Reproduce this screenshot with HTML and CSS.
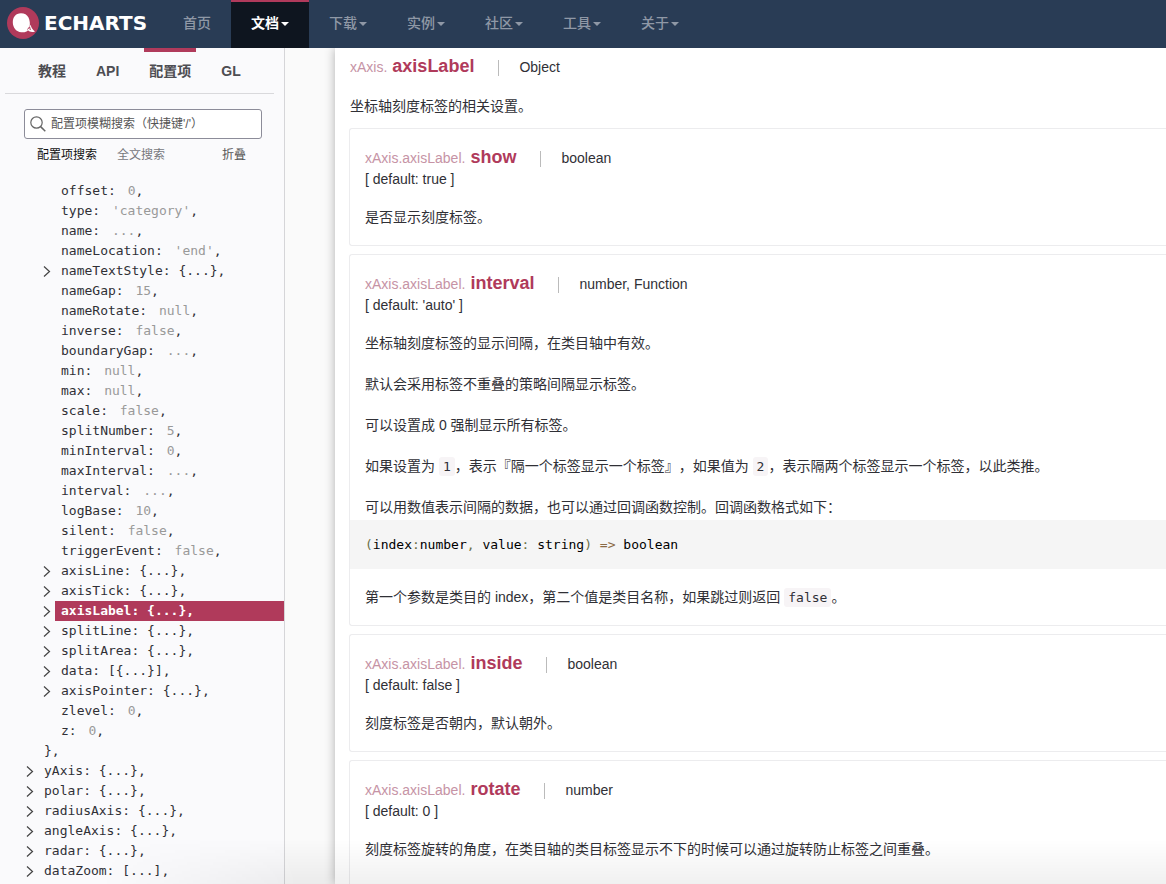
FILE: index.html
```html
<!DOCTYPE html>
<html lang="zh-CN">
<head>
<meta charset="utf-8">
<title>ECharts 配置项</title>
<link rel="stylesheet" href="styles.css">
</head>
<body>
<svg class="defs" width="0" height="0" aria-hidden="true">
  <symbol id="arrow" viewBox="0 0 8 12"><path d="M1 1.500 L6.500 6.500 L1 11.500" fill="none" stroke="currentColor" stroke-width="1.2"/></symbol>
</svg>
<header class="navbar">
  <a class="brand" href="#">
    <svg class="brand-mark" viewBox="0 0 32 32" aria-hidden="true">
      <circle cx="16" cy="16" r="16" fill="#b03a5b"/>
      <path d="M14 6.200C8.500 6.200 5.800 10.500 5.800 15.200C5.800 20.800 9.500 24.800 14.200 25.200C17.500 25.500 19.500 25 21 23.200C22.500 24.800 25 25.500 28 24.400C26 23 24.300 21 23.600 17.800L22.500 20C23.300 17 22.800 13.500 21.500 10.500C20 7.600 17.500 6.200 14 6.200Z" fill="#fff"/>
      <path d="M20.500 22.500L22.600 19.800L23.300 23" fill="none" stroke="#b03a5b" stroke-width="1"/>
    </svg>
    <span class="brand-name">ECHARTS</span>
  </a>
  <nav class="menu">
    <a class="menu-item" href="#">首页</a>
    <a class="menu-item menu-item--active" href="#">文档<span class="caret"></span></a>
    <a class="menu-item" href="#">下载<span class="caret"></span></a>
    <a class="menu-item" href="#">实例<span class="caret"></span></a>
    <a class="menu-item" href="#">社区<span class="caret"></span></a>
    <a class="menu-item" href="#">工具<span class="caret"></span></a>
    <a class="menu-item" href="#">关于<span class="caret"></span></a>
  </nav>
</header>
<div class="page">
  <aside class="sidebar">
    <nav class="tabs">
      <a class="tab" href="#">教程</a>
      <a class="tab" href="#">API</a>
      <a class="tab tab--active" href="#">配置项</a>
      <a class="tab" href="#">GL</a>
    </nav>
    <div class="search">
      <svg class="search-icon" viewBox="0 0 16 16" aria-hidden="true"><circle cx="6.500" cy="6.500" r="5.700" fill="none" stroke="#666" stroke-width="1.200"/><path d="M10.600 10.600L15.300 15.300" stroke="#666" stroke-width="1.500"/></svg>
      <input class="search-input" type="text" aria-label="配置项模糊搜索" placeholder="配置项模糊搜索（快捷键'/'）">
    </div>
    <div class="modes">
      <button class="mode mode--active" type="button">配置项搜索</button>
      <button class="mode" type="button">全文搜索</button>
      <button class="mode mode--fold" type="button">折叠</button>
    </div>
    <ul class="tree">
      <li>
        <ul class="branch">
          <li class="row"><a class="node" href="#">offset: <i>0</i>,</a></li>
          <li class="row"><a class="node" href="#">type: <i>'category'</i>,</a></li>
          <li class="row"><a class="node" href="#">name: <i>...</i>,</a></li>
          <li class="row"><a class="node" href="#">nameLocation: <i>'end'</i>,</a></li>
          <li class="row"><svg class="arrow"><use href="#arrow"/></svg><a class="node" href="#">nameTextStyle: {...},</a></li>
          <li class="row"><a class="node" href="#">nameGap: <i>15</i>,</a></li>
          <li class="row"><a class="node" href="#">nameRotate: <i>null</i>,</a></li>
          <li class="row"><a class="node" href="#">inverse: <i>false</i>,</a></li>
          <li class="row"><a class="node" href="#">boundaryGap: <i>...</i>,</a></li>
          <li class="row"><a class="node" href="#">min: <i>null</i>,</a></li>
          <li class="row"><a class="node" href="#">max: <i>null</i>,</a></li>
          <li class="row"><a class="node" href="#">scale: <i>false</i>,</a></li>
          <li class="row"><a class="node" href="#">splitNumber: <i>5</i>,</a></li>
          <li class="row"><a class="node" href="#">minInterval: <i>0</i>,</a></li>
          <li class="row"><a class="node" href="#">maxInterval: <i>...</i>,</a></li>
          <li class="row"><a class="node" href="#">interval: <i>...</i>,</a></li>
          <li class="row"><a class="node" href="#">logBase: <i>10</i>,</a></li>
          <li class="row"><a class="node" href="#">silent: <i>false</i>,</a></li>
          <li class="row"><a class="node" href="#">triggerEvent: <i>false</i>,</a></li>
          <li class="row"><svg class="arrow"><use href="#arrow"/></svg><a class="node" href="#">axisLine: {...},</a></li>
          <li class="row"><svg class="arrow"><use href="#arrow"/></svg><a class="node" href="#">axisTick: {...},</a></li>
          <li class="row"><svg class="arrow"><use href="#arrow"/></svg><a class="node node--active" href="#">axisLabel: {...},</a></li>
          <li class="row"><svg class="arrow"><use href="#arrow"/></svg><a class="node" href="#">splitLine: {...},</a></li>
          <li class="row"><svg class="arrow"><use href="#arrow"/></svg><a class="node" href="#">splitArea: {...},</a></li>
          <li class="row"><svg class="arrow"><use href="#arrow"/></svg><a class="node" href="#">data: [{...}],</a></li>
          <li class="row"><svg class="arrow"><use href="#arrow"/></svg><a class="node" href="#">axisPointer: {...},</a></li>
          <li class="row"><a class="node" href="#">zlevel: <i>0</i>,</a></li>
          <li class="row"><a class="node" href="#">z: <i>0</i>,</a></li>
        </ul>
      </li>
      <li class="row"><span class="node">},</span></li>
      <li class="row"><svg class="arrow"><use href="#arrow"/></svg><a class="node" href="#">yAxis: {...},</a></li>
      <li class="row"><svg class="arrow"><use href="#arrow"/></svg><a class="node" href="#">polar: {...},</a></li>
      <li class="row"><svg class="arrow"><use href="#arrow"/></svg><a class="node" href="#">radiusAxis: {...},</a></li>
      <li class="row"><svg class="arrow"><use href="#arrow"/></svg><a class="node" href="#">angleAxis: {...},</a></li>
      <li class="row"><svg class="arrow"><use href="#arrow"/></svg><a class="node" href="#">radar: {...},</a></li>
      <li class="row"><svg class="arrow"><use href="#arrow"/></svg><a class="node" href="#">dataZoom: [...],</a></li>
    </ul>
  </aside>
  <main class="content">
    <section class="intro">
      <h1 class="title"><span class="path">xAxis.</span> <span class="name">axisLabel</span><span class="type">Object</span></h1>
      <p>坐标轴刻度标签的相关设置。</p>
    </section>
    <section class="card">
      <h2 class="title"><span class="path">xAxis.axisLabel.</span> <span class="name">show</span><span class="type">boolean</span></h2>
      <div class="default">[ default: true ]</div>
      <div class="desc"><p>是否显示刻度标签。</p></div>
    </section>
    <section class="card">
      <h2 class="title"><span class="path">xAxis.axisLabel.</span> <span class="name">interval</span><span class="type">number, Function</span></h2>
      <div class="default">[ default: 'auto' ]</div>
      <div class="desc">
        <p>坐标轴刻度标签的显示间隔，在类目轴中有效。</p>
        <p>默认会采用标签不重叠的策略间隔显示标签。</p>
        <p>可以设置成 0 强制显示所有标签。</p>
        <p>如果设置为 <code>1</code>，表示『隔一个标签显示一个标签』，如果值为 <code>2</code>，表示隔两个标签显示一个标签，以此类推。</p>
        <p>可以用数值表示间隔的数据，也可以通过回调函数控制。回调函数格式如下：</p>
        <pre class="block"><b>(</b>index<b>:</b>number<b>,</b> value<b>:</b> string<b>)</b> <em>=&gt;</em> boolean</pre>
        <p>第一个参数是类目的 index，第二个值是类目名称，如果跳过则返回 <code>false</code>。</p>
      </div>
    </section>
    <section class="card">
      <h2 class="title"><span class="path">xAxis.axisLabel.</span> <span class="name">inside</span><span class="type">boolean</span></h2>
      <div class="default">[ default: false ]</div>
      <div class="desc"><p>刻度标签是否朝内，默认朝外。</p></div>
    </section>
    <section class="card card--open">
      <h2 class="title"><span class="path">xAxis.axisLabel.</span> <span class="name">rotate</span><span class="type">number</span></h2>
      <div class="default">[ default: 0 ]</div>
      <div class="desc"><p>刻度标签旋转的角度，在类目轴的类目标签显示不下的时候可以通过旋转防止标签之间重叠。</p></div>
    </section>
  </main>
</div>
<div class="fade"></div>
</body>
</html>
```
FILE: styles.css
```css
* { box-sizing: border-box; }

body {
  display: flex;
  flex-direction: column;
  height: 100vh;
  margin: 0;
  overflow: hidden;
  background: #fafafa;
  color: #303036;
  font: 14px/21px "Liberation Sans", "Noto Sans CJK SC", sans-serif;
  text-spacing-trim: space-all;
}

a { color: inherit; text-decoration: none; }
p, h1, h2, ul, pre { margin: 0; padding: 0; }
ul { list-style: none; }
.defs { position: absolute; }

/* Top navigation */
.navbar {
  display: flex;
  flex: none;
  height: 48px;
  background: #293c55;
}
.brand {
  display: flex;
  align-items: center;
  gap: 5px;
  width: 163px;
  padding: 0 0 2px 7px;
}
.brand-mark { width: 32px; height: 32px; }
.brand-name {
  color: #fff;
  font: bold 20px/24px "DejaVu Sans", sans-serif;
}
.menu { display: flex; }
.menu-item {
  display: flex;
  align-items: center;
  gap: 2px;
  padding: 0 20px 2px;
  color: #8f98a6;
  font-weight: 500;
}
.menu-item--active {
  padding-bottom: 4px;
  border-top: 2px solid #b03a5b;
  background: #0e151f;
  color: #fff;
  font-weight: bold;
}
.caret {
  margin-top: 2px;
  border: 4px solid transparent;
  border-top-color: currentColor;
  border-bottom: 0;
}

.page { display: flex; flex: 1; min-height: 0; }

/* Sidebar */
.sidebar {
  flex: none;
  width: 285px;
  overflow: hidden;
  border-right: 1px solid #d5d5d8;
  background: #fafafc;
}
.tabs {
  display: flex;
  gap: 20px;
  height: 46px;
  margin: 0 10px 0 5px;
  padding-left: 28px;
  border-bottom: 1px solid #d9d9dc;
}
.tab {
  padding: 9px 5px 0;
  border-top: 4px solid transparent;
  color: #4d4d52;
  font-weight: bold;
}
.tab--active { border-top-color: #b03a5b; }
.search {
  display: flex;
  align-items: center;
  gap: 5px;
  height: 30px;
  margin: 15px 22px 0 24px;
  padding-left: 5px;
  border: 1px solid #8c8c99;
  border-radius: 3px;
  background: #fff;
}
.search-icon { flex: none; width: 16px; height: 16px; }
.search-input {
  flex: 1;
  min-width: 0;
  padding: 0;
  border: 0;
  outline: 0;
  background: none;
  font: 12px/20px "Liberation Sans", "Noto Sans CJK SC", sans-serif;
}
.search-input::placeholder { color: #555; opacity: 1; }
.modes {
  display: flex;
  gap: 20px;
  margin: 6px 38px 16px 37px;
}
.mode {
  padding: 0;
  border: 0;
  background: none;
  color: #77777c;
  font: 12px/20px "Liberation Sans", "Noto Sans CJK SC", sans-serif;
}
.mode--active { color: #111; }
.mode--fold { margin-left: auto; color: #555; }

/* Option tree */
.tree {
  padding-left: 26px;
  font: 13px/20px "DejaVu Sans Mono", monospace;
}
.branch { padding-left: 17px; }
.row {
  display: flex;
  align-items: center;
  justify-content: flex-end;
  gap: 4px;
  height: 20px;
}
.arrow { flex: none; width: 8px; height: 12px; color: #444; }
.node {
  flex: none;
  width: calc(100% - 12px);
  padding-left: 6px;
  white-space: nowrap;
}
.node i { margin-left: 4px; color: #999; font-style: normal; }
.node--active {
  background: #b03a5b;
  color: #fff;
  font-weight: bold;
}

/* Documentation */
.content {
  flex: 1;
  min-width: 0;
  margin-left: 50px;
  padding: 8px 0 0 14px;
  background: #fff;
  box-shadow: 0 0 10px rgba(0, 0, 0, 0.3);
  clip-path: inset(0 0 0 -20px);
}
.intro { padding: 0 0 11px 1px; }
.intro p { margin-top: 19px; }
.title {
  display: flex;
  align-items: baseline;
  gap: 5px;
  height: 21px;
  font-size: 14px;
  font-weight: normal;
}
.path { color: #c693a5; }
.name {
  color: #b03a5b;
  font-size: 18px;
  font-weight: bold;
}
.type {
  margin-left: 19px;
  padding-left: 21px;
  background: linear-gradient(#bbb, #bbb) left center / 1px 16px no-repeat;
}
.card {
  margin-bottom: 8px;
  padding: 18px 15px 17px;
  border: 1px solid #ececee;
  border-right: 0;
  border-radius: 3px 0 0 3px;
}
.card .title { height: 22px; }
.card--open { padding-bottom: 60px; }
.desc { margin-top: 17px; }
.desc p + p { margin-top: 20px; }
code {
  padding: 2px 4px;
  border-radius: 3px;
  background: #f7f4f6;
  font: 13px/17px "DejaVu Sans Mono", monospace;
}
.block {
  margin: 2px -15px 18px;
  padding: 14px 15px;
  background: #f5f5f5;
  color: #000;
  font: 13px/21px "DejaVu Sans Mono", monospace;
}
.block b { color: #6a6f45; font-weight: normal; }
.block em { color: #8a6a45; font-style: normal; }

.fade {
  position: fixed;
  right: 0;
  bottom: 0;
  left: 0;
  height: 44px;
  background: linear-gradient(rgba(0, 0, 0, 0), rgba(0, 0, 0, 0.06));
  mask-image: linear-gradient(to right, transparent 100px, #000 300px);
  pointer-events: none;
}
```
